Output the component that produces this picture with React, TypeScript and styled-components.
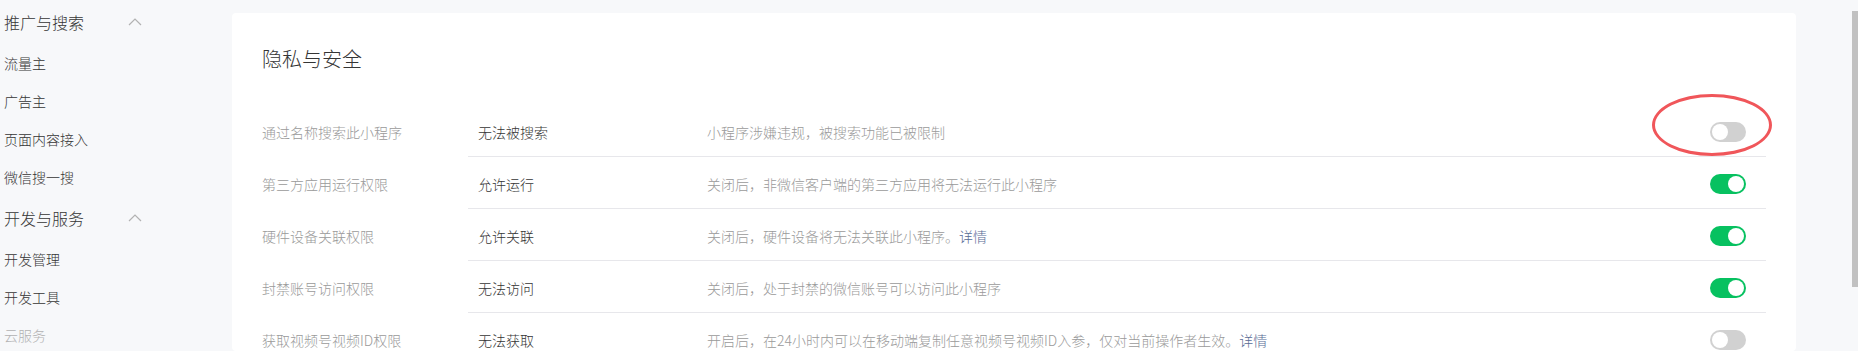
import React from "react";
import styled, { createGlobalStyle } from "styled-components";

const GlobalStyle = createGlobalStyle`
  html, body {
    margin: 0;
    padding: 0;
    background: #f7f8fa;
    font-family: "Noto Sans CJK SC", "Noto Sans", "Liberation Sans", sans-serif;
    font-weight: 300;
    color: #353535;
  }
`;

const Page = styled.div`
  display: flex;
  height: 351px;
  overflow: hidden;
`;

// 左侧菜单
const Sidebar = styled.nav`
  width: 232px;
  flex-shrink: 0;
  padding-left: 4px;
  box-sizing: border-box;
`;

const GroupHeader = styled.div`
  display: flex;
  align-items: center;
  justify-content: space-between;
  width: 138px;
  height: 44px;
  font-size: 16px;
  color: #353535;
`;

const Chevron = styled.svg`
  width: 14px;
  height: 9px;
  margin-bottom: 2px;
`;

const MenuItem = styled.div<{ $faded?: boolean }>`
  display: flex;
  align-items: center;
  height: 38px;
  font-size: 14px;
  color: ${p => (p.$faded ? "#b2b2b2" : "#353535")};
`;

const Main = styled.main`
  flex: 1;
  padding: 13px 56px 0 0;
`;

const Card = styled.section`
  background: #fff;
  border-radius: 4px;
  padding: 32px 30px 0;
  height: 100%;
  box-sizing: border-box;
`;

const Title = styled.h2`
  margin: 0 0 32px;
  font-size: 20px;
  line-height: 28px;
  font-weight: 300;
  color: #353535;
`;

const Row = styled.div`
  display: flex;
`;

const Label = styled.div`
  width: 206px;
  flex-shrink: 0;
  display: flex;
  align-items: center;
  padding-top: 2px;
  font-size: 14px;
  color: #9a9a9a;
`;

const RowBody = styled.div<{ $last?: boolean }>`
  flex: 1;
  display: flex;
  align-items: center;
  height: 52px;
  padding: 2px 20px 0 10px;
  box-sizing: border-box;
  border-bottom: 1px solid ${p => (p.$last ? "transparent" : "#e7e7eb")};
  font-size: 14px;
`;

const Value = styled.div`
  width: 229px;
  flex-shrink: 0;
  color: #353535;
`;

const Desc = styled.div`
  flex: 1;
  color: #9a9a9a;
`;

const Link = styled.a`
  color: #576b95;
  text-decoration: none;
`;

const SwitchWrap = styled.div`
  position: relative;
`;

const Switch = styled.div<{ $on: boolean }>`
  width: 36px;
  height: 20px;
  border-radius: 10px;
  background: ${p => (p.$on ? "#07c160" : "#d1d1d1")};
  display: flex;
  align-items: center;
  justify-content: ${p => (p.$on ? "flex-end" : "flex-start")};
  padding: 0 2px;
  box-sizing: border-box;
`;

const Knob = styled.div`
  width: 16px;
  height: 16px;
  border-radius: 50%;
  background: #fff;
`;

// 红圈标注
const Circle = styled.div`
  position: absolute;
  left: -58px;
  top: -28px;
  width: 120px;
  height: 62px;
  border: 3px solid #f0565a;
  border-radius: 50%;
  box-sizing: border-box;
  pointer-events: none;
`;

const ScrollTrack = styled.div`
  width: 6px;
  flex-shrink: 0;
  padding-top: 11px;
`;

const ScrollThumb = styled.div`
  height: 276px;
  background: #c1c1c1;
`;

type Setting = {
  label: string;
  value: string;
  desc: string;
  link?: boolean;
  on: boolean;
  marked?: boolean;
};

const settings: Setting[] = [
  { label: "通过名称搜索此小程序", value: "无法被搜索", desc: "小程序涉嫌违规，被搜索功能已被限制", on: false, marked: true },
  { label: "第三方应用运行权限", value: "允许运行", desc: "关闭后，非微信客户端的第三方应用将无法运行此小程序", on: true },
  { label: "硬件设备关联权限", value: "允许关联", desc: "关闭后，硬件设备将无法关联此小程序。", link: true, on: true },
  { label: "封禁账号访问权限", value: "无法访问", desc: "关闭后，处于封禁的微信账号可以访问此小程序", on: true },
  { label: "获取视频号视频ID权限", value: "无法获取", desc: "开启后，在24小时内可以在移动端复制任意视频号视频ID入参，仅对当前操作者生效。", link: true, on: false },
];

const menu = [
  { title: "推广与搜索", items: ["流量主", "广告主", "页面内容接入", "微信搜一搜"] },
  { title: "开发与服务", items: ["开发管理", "开发工具", "云服务"] },
];

const UpIcon = () => (
  <Chevron viewBox="0 0 14 9" fill="none">
    <path d="M1 8L7 2l6 6" stroke="#b2b2b2" strokeWidth="1.2" />
  </Chevron>
);

export default function App() {
  return (
    <>
      <GlobalStyle />
      <Page>
        <Sidebar>
          {menu.map(group => (
            <div key={group.title}>
              <GroupHeader>
                <span>{group.title}</span>
                <UpIcon />
              </GroupHeader>
              {group.items.map(item => (
                <MenuItem key={item} $faded={item === "云服务"}>
                  {item}
                </MenuItem>
              ))}
            </div>
          ))}
        </Sidebar>

        <Main>
          <Card>
            <Title>隐私与安全</Title>
            {settings.map((s, i) => (
              <Row key={s.label}>
                <Label>{s.label}</Label>
                <RowBody $last={i === settings.length - 1}>
                  <Value>{s.value}</Value>
                  <Desc>
                    {s.desc}
                    {s.link && <Link href="#">详情</Link>}
                  </Desc>
                  <SwitchWrap>
                    <Switch $on={s.on}>
                      <Knob />
                    </Switch>
                    {s.marked && <Circle />}
                  </SwitchWrap>
                </RowBody>
              </Row>
            ))}
          </Card>
        </Main>

        <ScrollTrack>
          <ScrollThumb />
        </ScrollTrack>
      </Page>
    </>
  );
}
